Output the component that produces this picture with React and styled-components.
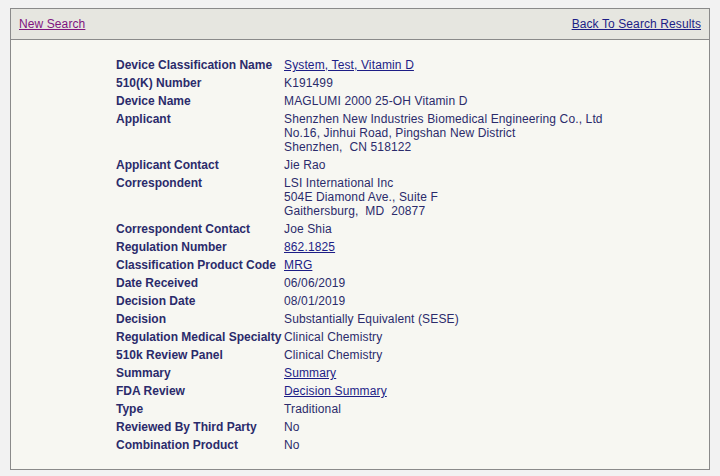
import React from "react";
import styled, { createGlobalStyle } from "styled-components";

const Global = createGlobalStyle`
  html, body { margin: 0; padding: 0; background: #f2f2f2; }
  body { padding: 8px 10px; font-family: "Liberation Sans", Arial, sans-serif; font-size: 12px; color: #2b2b6b; }
`;

const Panel = styled.div`
  width: 698px;
  border: 1px solid #8a8a8a;
  background: #f7f7f2;
`;

const Header = styled.div`
  display: flex;
  justify-content: space-between;
  align-items: center;
  height: 30px;
  padding: 0 8px 0 8px;
  background: #e6e6e0;
  border-bottom: 1px solid #8a8a8a;
  font-size: 12px;
  letter-spacing: 0.1px;
`;

const Link = styled.a`
  color: ${(p) => (p.$visited ? "#80157f" : "#1d1d86")};
  text-decoration: underline;
  cursor: pointer;
`;

const Body = styled.div`
  padding: 16px 0 15px 105px;
`;

const Grid = styled.div`
  display: grid;
  grid-template-columns: 168px auto;
  line-height: 14px;
`;

const Label = styled.div`
  font-weight: bold;
  padding: 2px 0;
`;

const Value = styled.div`
  padding: 2px 0;
  letter-spacing: 0.13px;
`;

const rows = [
  ["Device Classification Name", { link: "System, Test, Vitamin D" }],
  ["510(K) Number", "K191499"],
  ["Device Name", "MAGLUMI 2000 25-OH Vitamin D"],
  ["Applicant", ["Shenzhen New Industries Biomedical Engineering Co., Ltd", "No.16, Jinhui Road, Pingshan New District", "Shenzhen,\u00a0 CN 518122"]],
  ["Applicant Contact", "Jie Rao"],
  ["Correspondent", ["LSI International Inc", "504E Diamond Ave., Suite F", "Gaithersburg,\u00a0 MD\u00a0 20877"]],
  ["Correspondent Contact", "Joe Shia"],
  ["Regulation Number", { link: "862.1825" }],
  ["Classification Product Code", { link: "MRG" }],
  ["Date Received", "06/06/2019"],
  ["Decision Date", "08/01/2019"],
  ["Decision", "Substantially Equivalent (SESE)"],
  ["Regulation Medical Specialty", "Clinical Chemistry"],
  ["510k Review Panel", "Clinical Chemistry"],
  ["Summary", { link: "Summary" }],
  ["FDA Review", { link: "Decision Summary" }],
  ["Type", "Traditional"],
  ["Reviewed By Third Party", "No"],
  ["Combination Product", "No"],
];

function renderValue(v) {
  if (Array.isArray(v)) {
    return v.map((line, i) => (
      <React.Fragment key={i}>
        {line}
        {i < v.length - 1 && <br />}
      </React.Fragment>
    ));
  }
  if (typeof v === "object") return <Link href="#">{v.link}</Link>;
  return v;
}

export default function App() {
  return (
    <>
      <Global />
      <Panel>
        <Header>
          <Link $visited href="#">New Search</Link>
          <Link href="#">Back To Search Results</Link>
        </Header>
        <Body>
          <Grid>
            {rows.map(([label, value]) => (
              <React.Fragment key={label}>
                <Label>{label}</Label>
                <Value>{renderValue(value)}</Value>
              </React.Fragment>
            ))}
          </Grid>
        </Body>
      </Panel>
    </>
  );
}
